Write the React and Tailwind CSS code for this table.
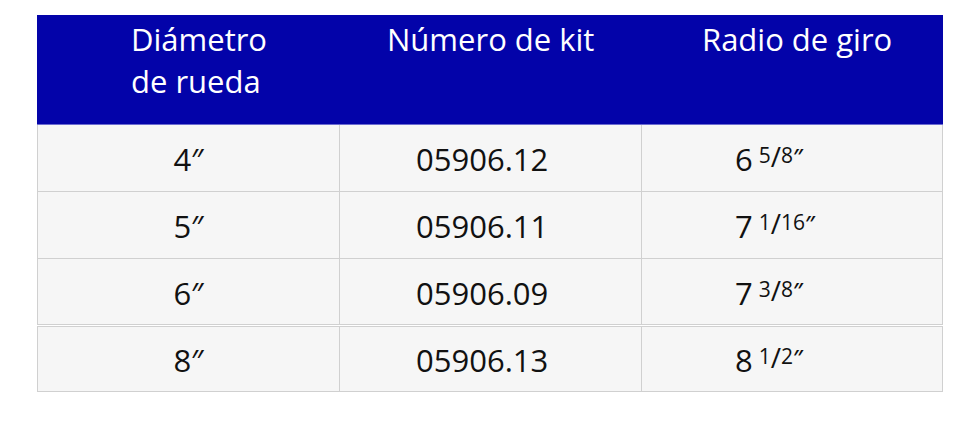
const data = [
  { size: "4″", kit: "05906.12", whole: "6", num: "5", den: "8" },
  { size: "5″", kit: "05906.11", whole: "7", num: "1", den: "16" },
  { size: "6″", kit: "05906.09", whole: "7", num: "3", den: "8" },
  { size: "8″", kit: "05906.13", whole: "8", num: "1", den: "2" },
];

const font = { fontFamily: '"Open Sans", "DejaVu Sans", sans-serif' };

function Fraction({ whole, num, den }) {
  return (
    <span className="inline-flex items-start leading-none">
      <span className="text-[31px]">{whole}</span>
      <span className="w-[6px]" />
      <span className="text-[21px] mt-[1px]">{num}</span>
      <span className="text-[28px] -mt-[2px]">/</span>
      <span className="text-[21px] mt-[1px]">{den}</span>
      <span className="text-[22px] mt-[1px] font-semibold">″</span>
    </span>
  );
}

export default function App() {
  return (
    <div className="w-[969px] h-[423px] bg-white pt-[15px] pl-[37px]" style={font}>
      <div className="w-[906px]">
        {/* header */}
        <div className="flex h-[110px] bg-[#0303a9] text-white text-[31px] leading-[42px] border-b border-[#6c6cd0]">
          <div className="w-[303px] pl-[94px] pt-[3px]">
            Diámetro
            <br />
            de rueda
          </div>
          <div className="w-[302px] pl-[47px] pt-[3px]">Número de kit</div>
          <div className="w-[301px] pl-[60px] pt-[3px]">Radio de giro</div>
        </div>

        {/* body */}
        {data.map((r, i) => (
          <div
            key={r.kit}
            className={
              "flex bg-[#f6f6f6] text-[#111] border-b border-[#d0d0d0] " +
              (i === 3 ? "h-[66px] border-t mt-[1px]" : i === 2 ? "h-[66px]" : "h-[67px]")
            }
          >
            <div className="w-[303px] border-l border-r border-[#d0d0d0] flex items-center justify-center pt-[3px] text-[31px]">
              {r.size}
            </div>
            <div className="w-[302px] border-r border-[#d0d0d0] flex items-center pl-[76px] pt-[3px] text-[31px]">
              {r.kit}
            </div>
            <div className="w-[301px] border-r border-[#d0d0d0] flex items-center pl-[93px] pt-[3px]">
              <Fraction whole={r.whole} num={r.num} den={r.den} />
            </div>
          </div>
        ))}
      </div>
    </div>
  );
}
